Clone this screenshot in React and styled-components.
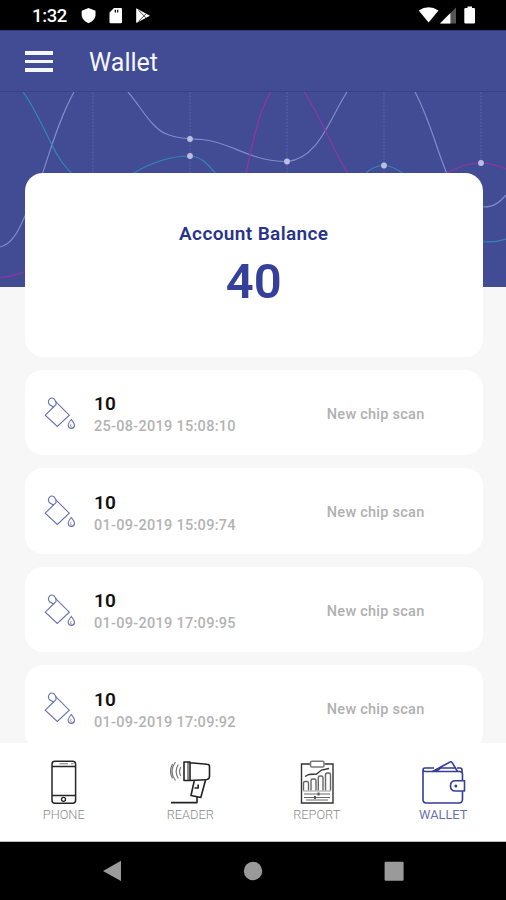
import React from "react";
import styled, { createGlobalStyle } from "styled-components";

const Global = createGlobalStyle`
  * { box-sizing: border-box; }
  body { margin: 0; background: #000; font-family: Roboto, sans-serif; }
  svg { display: block; flex: none; }
`;

const Screen = styled.div`
  width: 506px;
  height: 900px;
  display: flex;
  flex-direction: column;
  overflow: hidden;
  background: #f7f7f7;
`;

const StatusBar = styled.div`
  height: 30px;
  flex: none;
  display: flex;
  align-items: center;
  justify-content: space-between;
  padding: 2px 31px 0 32px;
  background: #000;
  color: #fff;
`;

const Clock = styled.span`
  width: 48px;
  font-size: 18.5px;
  line-height: 20px;
  font-weight: 500;
  letter-spacing: -0.35px;
`;

const StatusGroup = styled.div`
  display: flex;
  align-items: center;
`;

const AppBar = styled.header`
  height: 62px;
  flex: none;
  display: flex;
  align-items: center;
  gap: 36px;
  padding: 1px 25px 0;
  background: #414c95;
  border-top: 1px solid #303a7c;
  border-bottom: 1px solid #38428a;
`;

const MenuButton = styled.button`
  display: flex;
  flex-direction: column;
  gap: 5px;
  width: 28px;
  padding: 0;
  border: 0;
  background: none;
`;

const MenuLine = styled.span`
  height: 3.4px;
  background: #f4f5ff;
`;

const Title = styled.h1`
  margin: 0;
  padding-top: 2px;
  font-size: 25px;
  font-weight: 400;
  line-height: 30px;
  color: #f6f6ff;
`;

const Content = styled.main`
  height: 651px;
  flex: none;
  overflow: hidden;
`;

const Hero = styled.div`
  height: 195px;
  background: #414c95;
`;

const Cards = styled.div`
  position: relative;
  margin: -114px 23.5px 0 25px;
  display: flex;
  flex-direction: column;
  gap: 12.8px;
`;

const BalanceCard = styled.section`
  height: 184px;
  border-radius: 18px;
  background: #fff;
  display: flex;
  flex-direction: column;
  align-items: center;
  padding-top: 49px;
  color: #303b8e;
`;

const BalanceLabel = styled.div`
  font-size: 19px;
  line-height: 24px;
  font-weight: 600;
  letter-spacing: 0.38px;
  color: #28338a;
`;

const BalanceValue = styled.div`
  font-size: 49px;
  line-height: 56px;
  margin-top: 8px;
  font-weight: 600;
  color: #35409a;
`;

const Row = styled.article`
  height: 85.7px;
  flex: none;
  border-radius: 18px;
  background: #fff;
  display: flex;
  align-items: center;
  padding: 0 58px 0 18px;
`;

const RowText = styled.div`
  flex: 1;
  margin-left: 18px;
  padding-top: 5px;
`;

const Amount = styled.div`
  font-size: 19px;
  line-height: 23px;
  font-weight: 600;
  color: #111;
  letter-spacing: 0.2px;
`;

const Stamp = styled.div`
  font-size: 14.5px;
  line-height: 23px;
  font-weight: 500;
  letter-spacing: 0.28px;
  color: #b3b3b3;
`;

const Note = styled.div`
  padding-top: 3px;
  font-size: 14.5px;
  font-weight: 500;
  letter-spacing: 0.25px;
  color: #b0b0b0;
`;

const TabBar = styled.nav`
  height: 99px;
  flex: none;
  display: grid;
  grid-template-columns: repeat(4, 1fr);
  background: #fff;
  border-bottom: 1px solid #bbb;
`;

const Tab = styled.div`
  display: flex;
  flex-direction: column;
  align-items: center;
  padding: 14px 0 0 1px;
`;

const TabLabel = styled.span`
  margin-top: 1px;
  font-size: 12.8px;
  line-height: 16px;
  font-weight: ${(p) => (p.$active ? 400 : 300)};
  color: ${(p) => (p.$active ? "#6a72ac" : "#8c8c8c")};
`;

const NavBar = styled.footer`
  height: 58px;
  flex: none;
  display: flex;
  justify-content: space-between;
  align-items: center;
  padding: 0 102.5px 0 102px;
  background: #000;
`;

function StatusIcons() {
  return (
    <svg width="72" height="20" viewBox="80 6 72 20" fill="#fff">
      <path d="M88.5 8 95.5 10.8V15.5Q95 20.3 88.5 23.2Q82.3 20.3 81.7 15.5V10.8Z" />
      <path fillRule="evenodd" d="M114 8H121Q122 8 122 9V22.3Q122 23.3 121 23.3H110.5Q109.5 23.3 109.5 22.3V12.5ZM114.7 9.8V12.4H116V9.8ZM117.1 9.8V12.4H118.3V9.8Z" />
      <path d="M136.2 8.3 150 15.8 136.2 23Z" />
      <path d="M138.5 10.3 146 17.8M138.5 21.3 146 13.8" stroke="#333" strokeWidth=".9" />
    </svg>
  );
}

function SignalIcons() {
  return (
    <svg width="57" height="20" viewBox="418 6 57 20" fill="#fff">
      <path d="M418.7 10.5Q428.5 3.8 438.5 10.5L428.6 22.6Z" />
      <path d="M440 23.5 456 7.5V23.5Z" fill="#555" />
      <path d="M440 23.5 450.4 13V23.5Z" />
      <path d="M467.5 6.5H472V8H474Q475 8 475 9V22.4Q475 23.5 474 23.5H465.5Q464.3 23.5 464.3 22.4V9Q464.3 8 465.5 8H467.5Z" />
    </svg>
  );
}

const GRID_X = [93, 190, 287, 384, 481];
const POINTS = [[190, 139], [190, 156], [287, 161.5], [384, 165.5], [481, 163]];

function HeroChart() {
  return (
    <svg width="506" height="195" viewBox="0 92 506 195" fill="none">
      {GRID_X.map((x) => (
        <path key={x} d={`M${x} 92V${x === 481 ? 163 : 287}`} stroke="#5d67a8" strokeDasharray="2 1.3" strokeWidth=".9" />
      ))}
      <g strokeWidth="1.2">
        <g stroke="#8489ca">
          <path d="M0 247C13 244 19 229 25 216C34 195 39 179 43 172C51 148 60 117 74 92" />
          <path d="M128 92C142 108 152 130 169 135C181 139 190 139 202 139.5C232 142 247 161 287 161.5C318 159 329 120 347 92" />
          <path d="M415 92C430 120 436 148 447 174C455 194 466 207 484 207C494 207 500 202 506 195" />
        </g>
        <g stroke="#3188b8">
          <path d="M23 92C34 107 43 127 52 145C58 158 64 165 72 174" />
          <path d="M132 174C152 162 170 156 190 156C203 157 208 165 216 174" />
          <path d="M365 174C372 167 378 165.5 384 165.5S397 169 404 174" />
          <path d="M482 241.5Q494 243 506 239" />
        </g>
        <g stroke="#9434a4">
          <path d="M0 277.5Q13 277 26 271" />
          <path d="M246 174C253 140 260 108 271 92" />
          <path d="M304 92C319 113 332 148 348 174" />
          <path d="M446 174C458 166 470 163 481 163S499 166 506 169" />
        </g>
      </g>
      {POINTS.map(([x, y]) => (
        <circle key={`${x}-${y}`} cx={x} cy={y} r="2.9" fill="#bbbfe2" />
      ))}
    </svg>
  );
}

function ChipIcon() {
  return (
    <svg width="33" height="36" viewBox="43 395 33 36" fill="none" stroke="#6a70b0" strokeWidth="1.1">
      <path d="M53.5 407 45.2 415.2 57.3 426.5 69.3 415.2 55.2 401.2" />
      <path d="M53.5 407 56.3 404.3M53.5 407 49.5 404.8C46.7 400.5 50.4 396.3 54.2 399L56 401.8V404.4" />
      <path d="M71.3 419.5C69.5 421.7 68 423.6 68.2 425.5C68.5 429.3 74.3 429.3 74.5 425.4C74.5 423.6 73 421.7 71.3 419.5Z" />
      <path d="M71.3 424C69.6 425.4 70.4 427 71.7 427" strokeWidth=".7" />
    </svg>
  );
}

function PhoneIcon() {
  return (
    <svg width="50" height="49" viewBox="39 757 50 49" fill="none" stroke="#262626">
      <rect x="52" y="761.3" width="23.6" height="42" rx="3" strokeWidth="1.5" />
      <path d="M52 766.5H75.6M52 795.6H75.6" strokeWidth="1.5" />
      <path d="M59.5 763.8H68M71 763.8H73.5" stroke="#777" />
      <circle cx="63.5" cy="799.3" r="2" strokeWidth="1.3" />
    </svg>
  );
}

function ReaderIcon() {
  return (
    <svg width="50" height="49" viewBox="165 757 50 49" fill="none" stroke="#222" strokeWidth="1.6" strokeLinejoin="round">
      <path d="M184 762H190V780.5H184ZM190 762.8 207 764.2Q209.5 764.3 209.5 766.5V776Q209.5 779.5 206 779.7L190 780.5" />
      <path d="M188 762V780.5" strokeWidth="1" />
      <path d="M194.2 781 191 795.5 200.8 797.5 205.5 780.3M194.5 788H198.2V784.5M197 797V802.6H171" />
      <path d="M178.3 764.5Q174 771.5 178.3 778.5M175.5 762Q168.5 771.5 175.5 780.5M172.5 764Q168.5 771.5 172.5 778.5M180.8 767Q178.3 771.5 180.8 776" stroke="#777" strokeWidth="1.2" />
    </svg>
  );
}

function ReportIcon() {
  return (
    <svg width="50" height="49" viewBox="292 757 50 49" fill="none" stroke="#333">
      <path d="M310 764H301.5V803H333V764H324.5" strokeWidth="1.4" />
      <rect x="310.5" y="761.3" width="13.5" height="5.7" rx="1.5" stroke="#777" strokeWidth="1.5" />
      <path d="M303.5 790.6V783.2Q303.5 781.5 305 781.5H307Q308.5 781.5 308.5 783.2V790.6M311 790.6V780.5Q311 779 312.7 779H314.5Q316 779 316 780.5V790.6M318.3 790.6V777.5Q318.3 776 320 776H321.3Q323 776 323 777.5V790.6M325.5 790.6V775Q325.5 773 327.5 773H329Q330.5 773 330.5 775V790.6" stroke="#666" strokeWidth="1.4" />
      <path d="M303 791H331" stroke="#999" />
      <path d="M305 776.5 309 774.5 316.5 774 321.5 770 329 768.5" strokeWidth="1.3" />
      <path d="M304 794H330M304 797.5H330M306 800H328" stroke="#666" />
      <path d="M318.5 792.5V795.5M315 796V799" strokeWidth="2" stroke="#555" />
    </svg>
  );
}

function WalletIcon() {
  return (
    <svg width="50" height="49" viewBox="418 757 50 49" fill="none" stroke="#343d98" strokeWidth="1.6" strokeLinejoin="round">
      <path d="M434 768H425Q423 768 423 770V799.5Q423 803 426.5 803H459Q462.5 803 462.5 799V791.2M462.5 780.5V774Q462.5 771.5 459.5 771.5H425.5Q423 771.5 423 769.5M457 768H460Q462 768 462 770V772.5" />
      <path d="M432.5 771.5 450 762Q451.2 761.3 452.2 762.7L457.5 771.5M436 771.5 440.5 768H456.2" />
      <path d="M464.5 780.8H455.5Q450.5 780.8 450.5 785.9T455.5 791H464.5Z" />
      <circle cx="455.8" cy="785.9" r="1.5" fill="#343d98" stroke="none" />
    </svg>
  );
}

const ENTRIES = ["25-08-2019 15:08:10", "01-09-2019 15:09:74", "01-09-2019 17:09:95", "01-09-2019 17:09:92"];

const TABS = [
  { label: "PHONE", Icon: PhoneIcon },
  { label: "READER", Icon: ReaderIcon },
  { label: "REPORT", Icon: ReportIcon },
  { label: "WALLET", Icon: WalletIcon, active: true },
];

export default function App() {
  return (
    <Screen>
      <Global />
      <StatusBar>
        <StatusGroup>
          <Clock>1:32</Clock>
          <StatusIcons />
        </StatusGroup>
        <SignalIcons />
      </StatusBar>
      <AppBar>
        <MenuButton aria-label="Menu">
          <MenuLine />
          <MenuLine />
          <MenuLine />
        </MenuButton>
        <Title>Wallet</Title>
      </AppBar>
      <Content>
        <Hero>
          <HeroChart />
        </Hero>
        <Cards>
          <BalanceCard>
            <BalanceLabel>Account Balance</BalanceLabel>
            <BalanceValue>40</BalanceValue>
          </BalanceCard>
          {ENTRIES.map((stamp) => (
            <Row key={stamp}>
              <ChipIcon />
              <RowText>
                <Amount>10</Amount>
                <Stamp>{stamp}</Stamp>
              </RowText>
              <Note>New chip scan</Note>
            </Row>
          ))}
        </Cards>
      </Content>
      <TabBar>
        {TABS.map(({ label, Icon, active }) => (
          <Tab key={label}>
            <Icon />
            <TabLabel $active={active}>{label}</TabLabel>
          </Tab>
        ))}
      </TabBar>
      <NavBar>
        <svg width="20" height="22" viewBox="0 0 20 22"><path d="M1 11 19 .8V21Z" fill="#9a9a9a" /></svg>
        <svg width="20" height="20" viewBox="0 0 20 20"><circle cx="10" cy="10" r="9.2" fill="#9a9a9a" /></svg>
        <svg width="20" height="20" viewBox="0 0 20 20"><rect x=".6" y=".8" width="19" height="19" rx="1" fill="#9a9a9a" /></svg>
      </NavBar>
    </Screen>
  );
}
